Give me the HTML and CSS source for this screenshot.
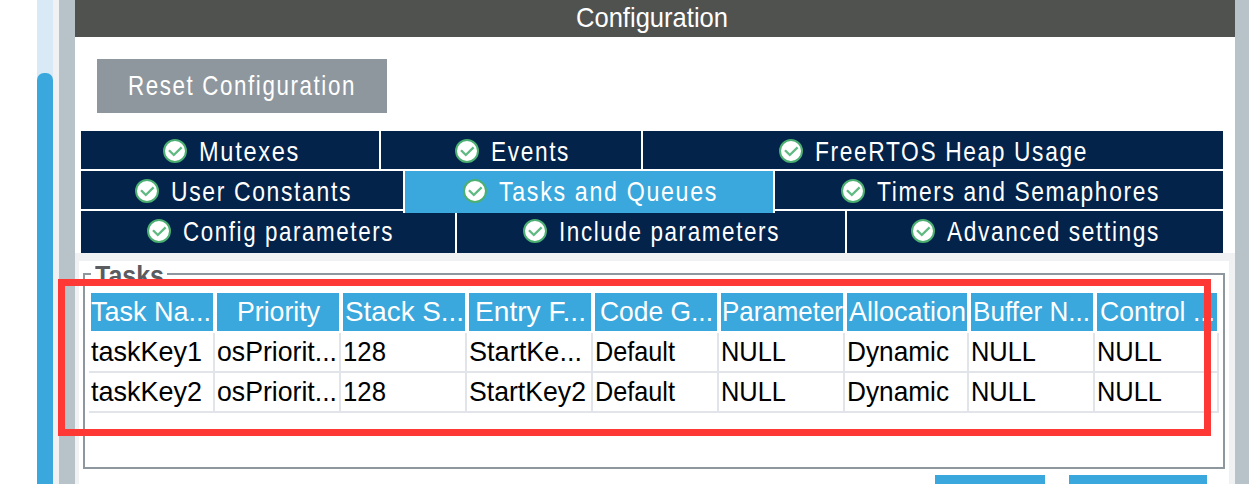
FILE: index.html
```
<!DOCTYPE html>
<html lang="en">
<head>
<meta charset="utf-8">
<title>Configuration</title>
<link rel="stylesheet" href="styles.css">
</head>
<body>
<svg width="0" height="0" class="defs">
  <symbol id="ok" viewBox="0 0 24 24">
    <circle cx="12" cy="12" r="11" fill="#fff" stroke="#4bb071" stroke-width="2"/>
    <path d="M6 11.2 L10.8 16 L18.6 8.4" fill="none" stroke="#5fba82" stroke-width="2.3"/>
  </symbol>
</svg>
<div class="window">
  <div class="scroll"><div class="thumb"></div></div>
  <div class="gutter"></div>
  <div class="divider"></div>
  <main class="panel">
    <header class="title"><span class="fit" data-w="152">Configuration</span></header>
    <div class="toolbar"><button class="reset"><span class="fit spaced" data-w="228">Reset Configuration</span></button></div>
    <nav class="tabs">
      <div class="tabrow row1">
        <div class="tab"><svg class="icon"><use href="#ok"/></svg><span class="fit spaced" data-w="101">Mutexes</span></div>
        <div class="tab"><svg class="icon"><use href="#ok"/></svg><span class="fit spaced" data-w="79">Events</span></div>
        <div class="tab"><svg class="icon"><use href="#ok"/></svg><span class="fit spaced" data-w="273">FreeRTOS Heap Usage</span></div>
      </div>
      <div class="tabrow row2">
        <div class="tab"><svg class="icon"><use href="#ok"/></svg><span class="fit spaced" data-w="181">User Constants</span></div>
        <div class="tab active"><svg class="icon"><use href="#ok"/></svg><span class="fit spaced" data-w="219">Tasks and Queues</span></div>
        <div class="tab"><svg class="icon"><use href="#ok"/></svg><span class="fit spaced" data-w="283">Timers and Semaphores</span></div>
      </div>
      <div class="tabrow row3">
        <div class="tab"><svg class="icon"><use href="#ok"/></svg><span class="fit spaced" data-w="211">Config parameters</span></div>
        <div class="tab"><svg class="icon"><use href="#ok"/></svg><span class="fit spaced" data-w="221">Include parameters</span></div>
        <div class="tab"><svg class="icon"><use href="#ok"/></svg><span class="fit spaced" data-w="213">Advanced settings</span></div>
      </div>
    </nav>
    <section class="content">
      <div class="page">
        <div class="group">
          <div class="legend"><span class="fit" data-w="69">Tasks</span></div>
          <div class="grid head">
            <div class="cut"><span class="fit" data-w="120">Task Na...</span></div>
            <div><span class="fit" data-w="83">Priority</span></div>
            <div><span class="fit" data-w="119">Stack S...</span></div>
            <div><span class="fit" data-w="111">Entry F...</span></div>
            <div><span class="fit" data-w="113">Code G...</span></div>
            <div><span class="fit" data-w="121">Parameter</span></div>
            <div><span class="fit" data-w="117">Allocation</span></div>
            <div class="cut"><span class="fit" data-w="117">Buffer N...</span></div>
            <div><span class="fit" data-w="115">Control ...</span></div>
          </div>
          <div class="grid line">
            <div><span class="fit" data-w="111">taskKey1</span></div>
            <div><span class="fit" data-w="120">osPriorit...</span></div>
            <div><span class="fit" data-w="43">128</span></div>
            <div><span class="fit" data-w="113">StartKe...</span></div>
            <div><span class="fit" data-w="80">Default</span></div>
            <div><span class="fit" data-w="65">NULL</span></div>
            <div><span class="fit" data-w="102">Dynamic</span></div>
            <div><span class="fit" data-w="65">NULL</span></div>
            <div><span class="fit" data-w="65">NULL</span></div>
          </div>
          <div class="grid line">
            <div><span class="fit" data-w="111">taskKey2</span></div>
            <div><span class="fit" data-w="120">osPriorit...</span></div>
            <div><span class="fit" data-w="43">128</span></div>
            <div><span class="fit" data-w="117">StartKey2</span></div>
            <div><span class="fit" data-w="80">Default</span></div>
            <div><span class="fit" data-w="65">NULL</span></div>
            <div><span class="fit" data-w="102">Dynamic</span></div>
            <div><span class="fit" data-w="65">NULL</span></div>
            <div><span class="fit" data-w="65">NULL</span></div>
          </div>
        </div>
        <div class="actions"><div class="action add"></div><div class="action remove"></div></div>
      </div>
    </section>
  </main>
  <div class="edge"></div>
  <div class="highlight"></div>
</div>
<script src="fit.js"></script>
</body>
</html>
```
FILE: styles.css
```
* { box-sizing: border-box; }
body {
  margin: 0;
  overflow: hidden;
  background: #fff;
  font-family: "Liberation Sans", Arial, sans-serif;
  font-size: 28px;
  white-space: nowrap;
}
.defs { display: block; }
.window { position: relative; display: flex; width: 1249px; height: 484px; padding-left: 37px; overflow: hidden; }
.scroll { width: 16px; padding-top: 73px; background: #d9e9f6; }
.thumb { height: 411px; border-radius: 7px 7px 0 0; background: #3aa8dc; }
.gutter { width: 6px; background: #f0f1f3; }
.divider { width: 16px; background: #b8c3c9; }
.edge { width: 14px; background: #b8c3c9; }
.panel { display: flex; flex-direction: column; width: 1160px; }

.fit { display: inline-block; transform-origin: 0 50%; }
.spaced { letter-spacing: 2px; }

.title { height: 37px; padding-left: 501px; line-height: 35px; background: #505250; color: #fff; }
.toolbar { height: 94px; padding: 22px 0 0 22px; }
.reset {
  display: block; width: 290px; height: 54px; padding: 0 0 1px 31px; border: 0;
  background: #8f979e; color: #fff; font: inherit; line-height: 53px; text-align: left;
}

.tabs { width: 1148px; padding-left: 6px; }
.tabrow { display: grid; column-gap: 2px; height: 40px; }
.row1 { grid-template-columns: 298px 260px 580px; }
.row2 { grid-template-columns: 322px 368px 448px; }
.row3 { grid-template-columns: 374px 388px 376px; height: 42px; }
.tab { display: flex; height: 38px; line-height: 41px; background: #03234b; color: #fff; }
.row3 .tab { height: 42px; }
.tab.active { position: relative; height: 42px; background: #3aa8dc; box-shadow: -2px 0 #fff, 2px 0 #fff; }
.icon { flex: none; width: 24px; height: 24px; margin: 8px 12px 0 0; }
.row1 .tab:nth-child(1) { padding-left: 82px; }
.row1 .tab:nth-child(2) { padding-left: 74px; }
.row1 .tab:nth-child(3) { padding-left: 136px; }
.row2 .tab:nth-child(1) { padding-left: 54px; }
.row2 .tab:nth-child(2) { padding-left: 58px; }
.row2 .tab:nth-child(3) { padding-left: 66px; }
.row3 .tab:nth-child(1) { padding-left: 66px; }
.row3 .tab:nth-child(2) { padding-left: 66px; }
.row3 .tab:nth-child(3) { padding-left: 64px; }

.content { height: 231px; padding: 8px 6px 0 4px; background: #f0f1f3; }
.page { height: 223px; padding: 12px 4px 0; background: #fff; }
.group { position: relative; height: 196px; padding: 18px 4px 0; border: 2px solid #8f979e; }
.legend {
  position: absolute; left: 6px; top: -12px; width: 76px; height: 24px; padding-left: 4px;
  background: #fff; color: #5b5c60; font-weight: bold; line-height: 25px;
}
.grid { display: grid; grid-template-columns: repeat(6, 126px) 124px 126px 124px; height: 40px; }
.head > div {
  display: flex; justify-content: center; height: 38px; margin: 0 2px;
  background: #3aa8dc; color: #fff; line-height: 37px;
}
.head > .cut { padding-right: 2px; }
.line > div { padding-left: 2px; border: solid #e1e4e8; border-width: 0 2px 2px 0; color: #000; line-height: 37px; }
.actions { display: flex; gap: 24px; padding: 6px 0 0 852px; }
.action { height: 9px; background: #3aa8dc; }
.add { width: 110px; }
.remove { width: 138px; }

.highlight { position: absolute; left: 58px; top: 279px; width: 1153px; height: 157px; border: 7px solid #fd3835; }
```
FILE: fit.js
```
document.querySelectorAll(".fit").forEach(function (el) {
  var target = Number(el.dataset.w);
  var natural = el.getBoundingClientRect().width;
  el.style.transform = "scaleX(" + target / natural + ")";
  el.style.marginRight = target - natural + "px";
});
```
